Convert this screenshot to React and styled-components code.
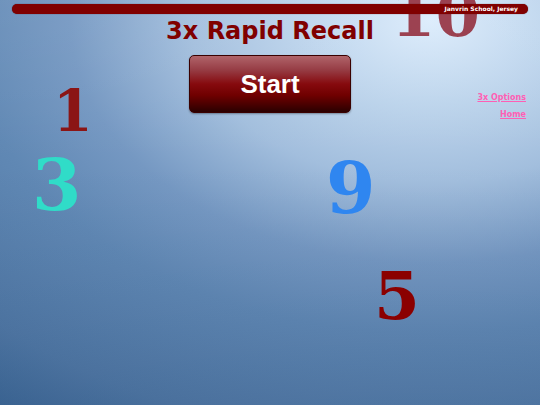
import styled, { createGlobalStyle } from 'styled-components'

const GlobalStyle = createGlobalStyle`
  html, body {
    margin: 0;
    padding: 0;
    overflow: hidden;
  }
  body {
    font-family: "DejaVu Sans", Verdana, sans-serif;
  }
`

const numbers = [
  { value: '10', color: 'rgba(135, 10, 24, 0.75)', size: 64, left: 391, top: -18 },
  { value: '1', color: '#8b1515', size: 57, left: 53, top: 82 },
  { value: '3', color: '#30dcc8', size: 71, left: 32, top: 150 },
  { value: '9', color: '#2f86f0', size: 71, left: 326, top: 153 },
  { value: '5', color: '#8b0000', size: 66, left: 374, top: 263 },
]

function App() {
  return (
    <Page>
      <GlobalStyle />
      {numbers.map(n => (
        <FloatingNumber key={n.value} $color={n.color} $size={n.size} $left={n.left} $top={n.top}>
          {n.value}
        </FloatingNumber>
      ))}
      <TopBar>
        <SchoolName>Janvrin School, Jersey</SchoolName>
      </TopBar>
      <Title>3x Rapid Recall</Title>
      <Stage>
        <div />
        <StartButton>Start</StartButton>
        <Links>
          <PinkLink href="#">3x Options</PinkLink>
          <PinkLink href="#">Home</PinkLink>
        </Links>
      </Stage>
    </Page>
  )
}

export default App

/***************************** Styled Components *****************************/

const Page = styled.div`
  position: relative;
  width: 540px;
  height: 405px;
  overflow: hidden;
  display: flex;
  flex-direction: column;
  background:
    linear-gradient(to bottom, rgba(255, 255, 255, 0.06), rgba(255, 255, 255, 0) 40%, rgba(0, 20, 60, 0.08)),
    radial-gradient(ellipse 800px 540px at 430px 20px, #dcecfc 0%, #c4daf0 12%, #a2bedd 30%, #7598c2 45%, #6088b4 58%, #5078a5 78%, #2e5b8b 100%);
`

const TopBar = styled.div`
  position: relative;
  z-index: 2;
  margin: 4px 12px 0;
  height: 10px;
  border-radius: 5px;
  background: #800000;
  box-shadow: 0 0 1px rgba(60, 0, 0, 0.8);
  display: flex;
  align-items: center;
  justify-content: flex-end;
  padding-right: 10px;
`

const SchoolName = styled.span`
  color: #ffffff;
  font-size: 6px;
  font-weight: bold;
  line-height: 1;
`

const Title = styled.h1`
  position: relative;
  z-index: 2;
  margin: 5px 0 0;
  text-align: center;
  font-size: 24px;
  line-height: 1;
  font-weight: bold;
  color: #800000;
`

const Stage = styled.div`
  position: relative;
  z-index: 2;
  display: grid;
  grid-template-columns: 1fr 162px 1fr;
  margin-top: 12px;
`

const StartButton = styled.button`
  height: 58px;
  border: 1px solid #3a0000;
  border-radius: 5px;
  background: linear-gradient(to bottom, #b0646a 0%, #963c44 25%, #860a0e 50%, #700000 70%, #2a0000 100%);
  box-shadow: 0 1px 2px rgba(0, 0, 0, 0.35);
  color: #ffffff;
  font-family: "Liberation Sans", Arial, sans-serif;
  font-weight: bold;
  font-size: 26px;
  padding: 0;
  cursor: pointer;
`

const Links = styled.div`
  display: flex;
  flex-direction: column;
  align-items: flex-end;
  gap: 9px;
  padding: 39px 14px 0 0;
`

const PinkLink = styled.a`
  color: #ff5fb4;
  font-size: 8px;
  font-weight: bold;
  line-height: 1;
  text-decoration: underline;
`

const FloatingNumber = styled.div`
  position: absolute;
  left: ${props => props.$left}px;
  top: ${props => props.$top}px;
  font-family: "DejaVu Serif", "Liberation Serif", serif;
  font-weight: bold;
  font-size: ${props => props.$size}px;
  line-height: 1;
  color: ${props => props.$color};
  z-index: 1;
`
